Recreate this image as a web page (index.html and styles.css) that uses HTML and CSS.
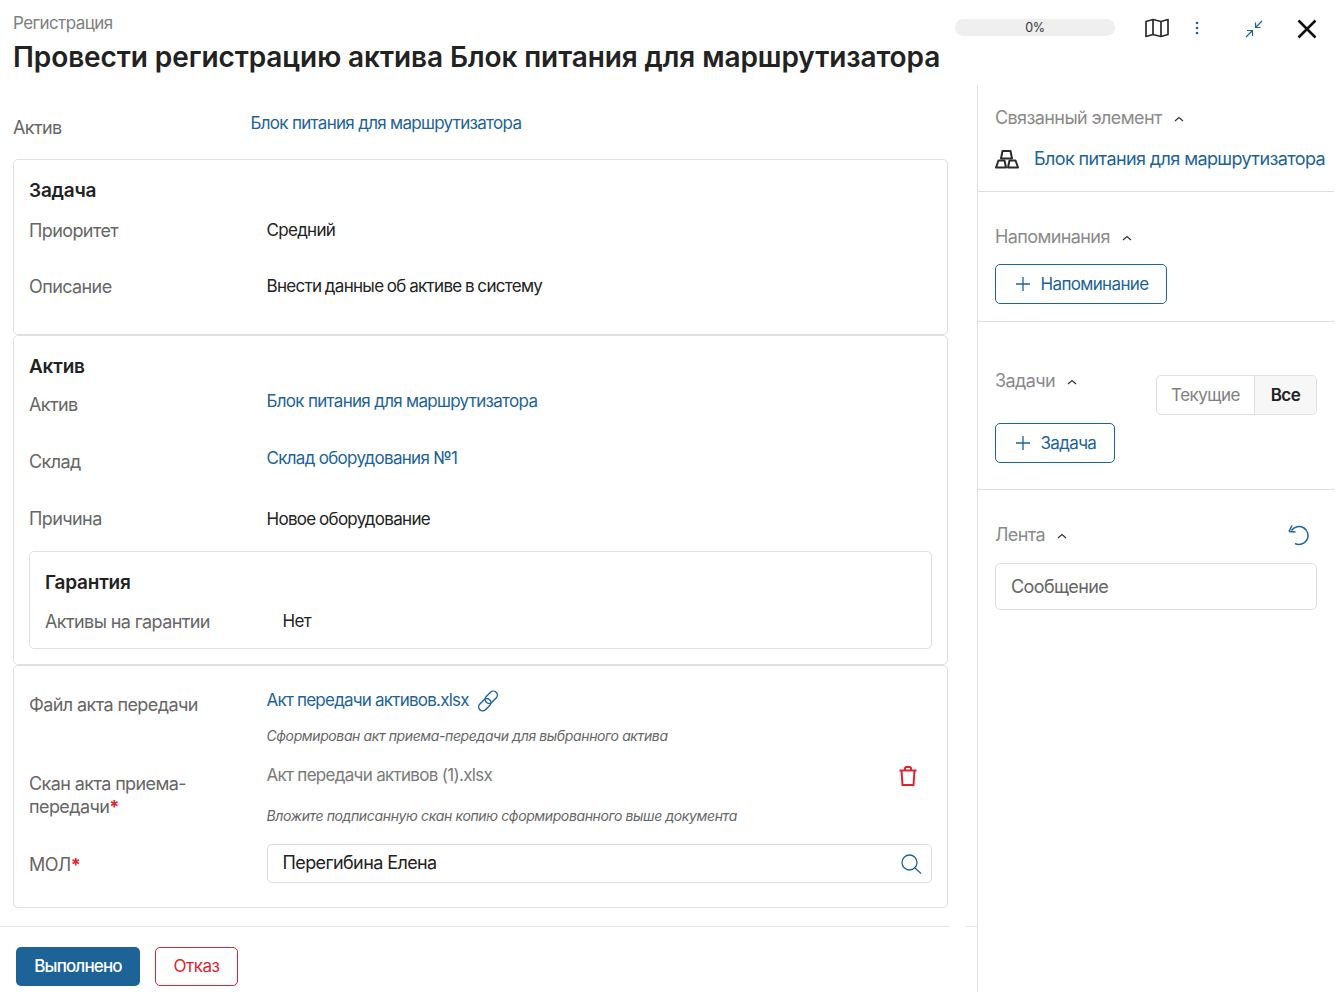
FILE: index.html
```html
<!DOCTYPE html>
<html lang="ru">
<head>
<meta charset="utf-8">
<title>Регистрация</title>
<link rel="stylesheet" href="styles.css">
</head>
<body>
<div class="page">
  <header class="top">
    <div class="heading">
      <div class="crumb">Регистрация</div>
      <h1>Провести регистрацию актива Блок питания для маршрутизатора</h1>
    </div>
    <div class="tools">
      <div class="progress">0%</div>
      <svg class="i-map" width="26" height="20" viewBox="0 0 26 20" fill="none" stroke="#2b2b2b" stroke-width="1.7" stroke-linejoin="round"><path d="M2 3.5 9 1.5 17 3.5 24 1.5V16.5L17 18.5 9 16.5 2 18.5Z"/><path d="M9 1.5V16.5M17 3.5V18.5"/></svg>
      <svg class="i-dots" width="4" height="14" viewBox="0 0 4 14" fill="#1d6398"><circle cx="2" cy="2" r="1.3"/><circle cx="2" cy="7" r="1.3"/><circle cx="2" cy="12" r="1.3"/></svg>
      <svg class="i-min" width="18" height="18" viewBox="0 0 18 18" fill="none" stroke="#1d6398" stroke-width="1.2"><path d="M17 1 10.500 7.500M10.500 2.500V7.500H15.500"/><path d="M1 17 7.500 10.500M2 10.500H7.500V16"/></svg>
      <svg class="i-close" width="20" height="20" viewBox="0 0 20 20" fill="none" stroke="#111" stroke-width="2.500"><path d="M1.500 1.500 18.500 18.500M18.500 1.500 1.500 18.500"/></svg>
    </div>
  </header>
  <div class="body">
    <main class="main">
      <div class="row top-row">
        <div class="label">Актив</div>
        <a class="link">Блок питания для маршрутизатора</a>
      </div>
      <section class="card card-task">
        <h2>Задача</h2>
        <div class="row r-prio"><div class="label">Приоритет</div><div class="val">Средний</div></div>
        <div class="row r-desc"><div class="label">Описание</div><div class="val">Внести данные об активе в систему</div></div>
      </section>
      <section class="card card-asset">
        <h2>Актив</h2>
        <div class="row r-a"><div class="label">Актив</div><a class="link">Блок питания для маршрутизатора</a></div>
        <div class="row r-a"><div class="label">Склад</div><a class="link">Склад оборудования №1</a></div>
        <div class="row r-reason"><div class="label">Причина</div><div class="val">Новое оборудование</div></div>
        <section class="card inner">
          <h2>Гарантия</h2>
          <div class="row r-war"><div class="label">Активы на гарантии</div><div class="val">Нет</div></div>
        </section>
      </section>
      <section class="card card-files">
        <div class="row r-file">
          <div class="label">Файл акта передачи</div>
          <div class="fileval">
            <a class="link">Акт передачи активов.xlsx</a>
            <svg width="22" height="22" viewBox="0 0 22 22" fill="none" stroke="#1d6398" stroke-width="1.4"><rect x="6.500" y="2.500" width="14" height="8" rx="4" transform="rotate(-45 13.500 6.500) translate(0 1)"/><rect x="1.500" y="11.500" width="14" height="8" rx="4" transform="rotate(-45 8.500 15.500) translate(0 -1)"/></svg>
          </div>
        </div>
        <div class="hint hint-1">Сформирован акт приема-передачи для выбранного актива</div>
        <div class="row r-scan">
          <div class="label">Скан акта приема-<br>передачи<span class="req">*</span></div>
          <div class="scanbox">
            <div class="scanline">
              <span class="muted">Акт передачи активов (1).xlsx</span>
              <svg class="i-trash" width="18" height="20" viewBox="0 0 18 20" fill="none" stroke="#e3222c" stroke-width="2"><path d="M0.500 4.500H17.500"/><path d="M6 4.500V2.500Q6 1 7.500 1H10.500Q12 1 12 2.500V4.500"/><path d="M2.500 4.500 3.500 19H14.500L15.500 4.500"/></svg>
            </div>
            <div class="hint hint-2">Вложите подписанную скан копию сформированного выше документа</div>
          </div>
        </div>
        <div class="row r-mol">
          <div class="label">МОЛ<span class="req">*</span></div>
          <div class="input">
            <span>Перегибина Елена</span>
            <svg width="22" height="22" viewBox="0 0 22 22" fill="none" stroke="#1d6398" stroke-width="1.300"><circle cx="9.500" cy="9.500" r="7.500"/><path d="M15 15 21 20.500"/></svg>
          </div>
        </div>
      </section>
      <footer class="actions">
        <button class="btn-primary">Выполнено</button>
        <button class="btn-reject">Отказ</button>
      </footer>
    </main>
    <aside class="side">
      <section class="s s-link">
        <div class="s-title">Связанный элемент <svg class="chev" width="10" height="6" viewBox="0 0 10 6" fill="none" stroke="#333" stroke-width="1.200"><path d="M1 5 5 1.500 9 5"/></svg></div>
        <div class="linked">
          <svg width="24" height="20" viewBox="0 0 24 20" fill="none" stroke="#2b2b2b" stroke-width="2" stroke-linejoin="round"><path d="M7.500 2H15.500L17 9.500H6Z"/><path d="M3.500 11.500H9.500L11 18.500H1Z"/><path d="M14.500 11.500H20.500L23 18.500H13Z"/></svg>
          <a class="link">Блок питания для маршрутизатора</a>
        </div>
      </section>
      <section class="s s-rem">
        <div class="s-title">Напоминания <svg class="chev" width="10" height="6" viewBox="0 0 10 6" fill="none" stroke="#333" stroke-width="1.200"><path d="M1 5 5 1.500 9 5"/></svg></div>
        <button class="btn-out w-rem"><svg width="14" height="14" viewBox="0 0 14 14" stroke="#1d6398" stroke-width="1.300"><path d="M7 0V14M0 7H14"/></svg>Напоминание</button>
      </section>
      <section class="s s-tasks">
        <div class="tasks-head">
          <div class="s-title">Задачи <svg class="chev" width="10" height="6" viewBox="0 0 10 6" fill="none" stroke="#333" stroke-width="1.200"><path d="M1 5 5 1.500 9 5"/></svg></div>
          <div class="seg"><span class="seg-a">Текущие</span><span class="seg-b">Все</span></div>
        </div>
        <button class="btn-out w-task"><svg width="14" height="14" viewBox="0 0 14 14" stroke="#1d6398" stroke-width="1.300"><path d="M7 0V14M0 7H14"/></svg>Задача</button>
      </section>
      <section class="s s-feed">
        <div class="feed-head">
          <div class="s-title">Лента <svg class="chev" width="10" height="6" viewBox="0 0 10 6" fill="none" stroke="#333" stroke-width="1.200"><path d="M1 5 5 1.500 9 5"/></svg></div>
          <svg width="22" height="22" viewBox="0 0 22 22" fill="none" stroke="#1d6398" stroke-width="1.500"><path d="M4.500 6.500A9 9 0 1 1 8 19.500"/><path d="M2 7.500 8.500 8M5 1.500 2 7.500"/></svg>
        </div>
        <div class="msg">Сообщение</div>
      </section>
    </aside>
  </div>
</div>
</body>
</html>
```
FILE: styles.css
```css
* { box-sizing: border-box; }
html, body { margin: 0; background: #fff; }
body { font-family: Inter, "Noto Sans", sans-serif; font-size: 18px; color: #222; letter-spacing: -0.6px; }
.page { width: 1338px; height: 992px; overflow: hidden; display: flex; flex-direction: column; }

.top { height: 85px; display: flex; justify-content: space-between; padding: 13px 21px 0 13px; flex: none; }
.crumb { font-size: 17px; line-height: 20px; color: #808080; }
h1 { margin: 4px 0 0; font-size: 28px; line-height: 40px; font-weight: 600; color: #222; letter-spacing: -0.09px; white-space: nowrap; }
.tools { display: flex; align-items: flex-start; padding-top: 6px; }
.progress { width: 160px; height: 17px; border-radius: 9px; background: #efefef; text-align: center; font-size: 12.500px; line-height: 18px; color: #333; letter-spacing: -0.4px; }
.i-map { margin: -1px 0 0 29px; }
.i-dots { margin: 2px 0 0 25px; }
.i-min { margin: 1px 0 0 46px; }
.i-close { margin: 0 0 0 34px; }

.body { flex: 1; display: flex; min-height: 0; }
.main { width: 977px; flex: none; padding: 0 0 0 13px; }
.row { display: grid; grid-template-columns: 237.500px 1fr; }
.label { color: #666; line-height: 23px; }
.card .label { margin-top: -1px; }
.card .r-prio .label { margin-top: 0; }
.val { color: #222; line-height: 23px; font-size: 17px; letter-spacing: -0.7px; word-spacing: -0.6px; }
.link { color: #1d6398; line-height: 23px; font-size: 17px; letter-spacing: -0.7px; }
.top-row { height: 74px; padding-top: 31px; }
.top-row .link { margin-top: -4px; }

.card { width: 935px; border: 1px solid #e0e0e0; border-radius: 5px; padding: 0 15px; }
h2 { margin: 0; font-size: 19px; line-height: 24px; font-weight: 600; color: #222; letter-spacing: -0.2px; }
.card-task { height: 176px; padding-top: 19px; }
.r-prio { margin-top: 16px; height: 57px; }
.r-desc { height: 57px; }
.r-desc .val { margin-top: -1px; }
.card-asset { height: 330px; padding-top: 19px; }
.r-a { height: 57px; }
.r-a .link { margin-top: -4px; }
.card-asset h2 + .r-a { margin-top: 15px; }
.r-reason { height: 43px; }
.inner { width: 903px; height: 98px; padding-top: 19px; }
.r-war { margin-top: 16px; }
.r-war .val { margin-top: -1px; }
.card-files { height: 243px; padding-top: 28px; }
.r-file .link { margin-top: -5px; }
.fileval { display: flex; align-items: flex-start; gap: 8px; }
.fileval .link { letter-spacing: -0.78px; }
.fileval svg { margin-top: -4px; }
.hint { font-style: italic; font-size: 14px; line-height: 20px; color: #666; letter-spacing: -0.38px; }
.hint-1 { margin: 10px 0 0 237.500px; }
.r-scan { margin-top: 27px; height: 70px; }
.req { color: #e3222c; font-weight: 700; }
.scanline { display: flex; justify-content: space-between; align-items: flex-start; padding-right: 15px; margin-top: -9px; }
.muted { color: #7a7a7a; font-size: 17px; line-height: 23px; letter-spacing: -0.7px; }
.hint-2 { margin-top: 19px; }
.r-mol { margin-top: 0; }
.r-mol .label { line-height: 46px; }
.input { height: 39px; border: 1px solid #dcdcdc; border-radius: 5px; margin-top: 1px; display: flex; align-items: center; justify-content: space-between; padding: 0 9px 2px 15px; font-size: 18px; color: #222; }
.input svg { margin-top: 2px; }
.i-trash { margin-top: 2px; }

.actions { position: relative; width: 950px; margin-left: -13px; margin-top: 18px; padding: 20px 0 0 16px; border-top: 1px solid #e6e6e6; display: flex; gap: 15px; }
.actions::after { content: ""; position: absolute; left: 966px; top: -1px; width: 11px; height: 1px; background: #e6e6e6; }
button { font-family: inherit; cursor: pointer; }
.btn-primary { width: 124px; height: 39px; padding: 0 0 2px; background: #1d6398; color: #fff; border: 0; border-radius: 5px; font-size: 17px; font-weight: 500; letter-spacing: -0.85px; }
.btn-reject { width: 83px; height: 39px; padding: 0 0 2px; background: #fff; color: #e3222c; border: 1px solid #e3222c; border-radius: 5px; font-size: 17px; letter-spacing: -0.5px; }

.side { width: 357px; flex: none; border-left: 1px solid #e2e2e2; }
.s { padding: 0 17px; border-bottom: 1px solid #dedede; }
.s-title { color: #8a8a8a; line-height: 24px; font-size: 18px; display: flex; align-items: center; gap: 12px; }
.chev { margin-top: 2px; flex: none; }
.s-link { height: 107px; padding-top: 21px; }
.linked { display: flex; align-items: center; gap: 15px; margin-top: 17px; white-space: nowrap; }
.linked svg { flex: none; }
.linked .link { font-size: 18px; letter-spacing: -0.6px; }
.s-rem { height: 130px; padding-top: 33px; }
.btn-out { display: flex; align-items: center; gap: 10.500px; height: 40px; background: #fff; border: 1px solid #1d6398; border-radius: 5px; color: #1d6398; font-size: 17px; letter-spacing: -0.65px; padding: 0 0 0 20px; }
.s-rem .btn-out { margin-top: 15px; }
.w-rem { width: 172px; }
.w-task { width: 120px; margin-top: 8px; }
.s-tasks { height: 168px; padding-top: 47px; }
.tasks-head { display: flex; justify-content: space-between; align-items: flex-start; }
.seg { display: flex; height: 40px; border: 1px solid #e0e0e0; border-radius: 5px; overflow: hidden; margin-top: 6px; font-size: 17px; line-height: 38px; letter-spacing: -0.5px; }
.seg-a { width: 98px; text-align: center; color: #808080; border-right: 1px solid #e0e0e0; }
.seg-b { width: 61px; text-align: center; background: #f7f7f7; color: #222; font-weight: 600; }
.s-feed { border-bottom: 0; padding-top: 33px; }
.feed-head { display: flex; justify-content: space-between; align-items: center; padding-right: 8px; }
.msg { margin-top: 16px; height: 47px; border: 1px solid #dedede; border-radius: 5px; padding-left: 15px; line-height: 45px; font-size: 18px; color: #666; }
```
